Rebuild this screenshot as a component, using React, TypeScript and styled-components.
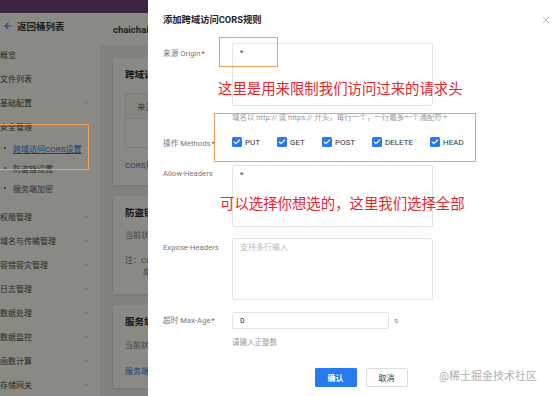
import styled, { createGlobalStyle } from 'styled-components'
import { X, ChevronDown, ArrowLeft, Check } from 'lucide-react'

const GlobalStyle = createGlobalStyle`
  *, *::before, *::after { box-sizing: border-box; }
  html, body { margin: 0; padding: 0; background: #fff; }
  body { font-family: Roboto, 'Noto Sans CJK SC', sans-serif; }
`

const Page = styled.div`
  position: relative;
  display: flex;
  width: 558px;
  height: 396px;
  overflow: hidden;
`

/* ---------- masked page behind the drawer ---------- */

const Backdrop = styled.div`
  position: relative;
  flex: none;
  width: 148px;
  height: 100%;
  display: flex;
  flex-direction: column;
  background: #f0f2f5;
  overflow: hidden;
`

const Mask = styled.div`
  position: absolute;
  inset: 0;
  background: rgba(10, 10, 0, 0.48);
  z-index: 1;
`

const TopBar = styled.div`
  flex: none;
  height: 13px;
  background: #6a3f80;
`

const BackdropBody = styled.div`
  flex: 1;
  display: flex;
  min-height: 0;
`

const Sidebar = styled.div`
  flex: none;
  width: 100px;
  background: #fff;
  display: flex;
  flex-direction: column;
`

const BackLink = styled.div`
  height: 34px;
  display: flex;
  align-items: center;
  gap: 4px;
  padding-left: 3px;
  font-size: 9.5px;
  font-weight: 700;
  color: #333;
  white-space: nowrap;

  svg {
    color: #1f6fe8;
  }
`

const Menu = styled.div`
  padding-top: 4px;
`

const MenuItem = styled.div`
  height: 24px;
  display: flex;
  align-items: center;
  justify-content: space-between;
  padding-right: 10px;
  font-size: 8px;
  color: #444;
  white-space: nowrap;

  svg {
    color: #aaa;
  }
`

const SubMenu = styled.div`
  padding-bottom: 6px;
`

const SubItem = styled.div<{ $active?: boolean }>`
  height: 20px;
  display: flex;
  align-items: center;
  gap: 7px;
  padding-left: 4px;
  font-size: 8px;
  white-space: nowrap;
  color: ${p => (p.$active ? '#1f6fe8' : '#555')};
  text-decoration: ${p => (p.$active ? 'underline' : 'none')};

  &::before {
    content: '';
    width: 2px;
    height: 2px;
    border-radius: 50%;
    background: #666;
  }
`

const Content = styled.div`
  flex: 1;
  min-width: 0;
  display: flex;
  flex-direction: column;
`

const ContentHeader = styled.div`
  flex: none;
  height: 32px;
  display: flex;
  align-items: center;
  padding-left: 13px;
  background: #fff;
  font-size: 9.5px;
  font-weight: 700;
  color: #333;
  white-space: nowrap;
`

const ContentBody = styled.div`
  display: flex;
  flex-direction: column;
  gap: 11px;
  padding: 13px 0 0 13px;
`

const Card = styled.div<{ $h: number }>`
  width: 400px;
  height: ${p => p.$h}px;
  padding: 11px 12px 0;
  background: #fff;
  box-shadow: 0 1px 3px rgba(0, 0, 0, 0.12);
  white-space: nowrap;
`

const CardTitle = styled.div`
  font-size: 9.5px;
  line-height: 12px;
  font-weight: 700;
  color: #222;
`

const CardText = styled.div<{ $mt: number; $indent?: number; $link?: boolean }>`
  margin-top: ${p => p.$mt}px;
  padding-left: ${p => p.$indent ?? 0}px;
  font-size: 8px;
  line-height: 12px;
  color: ${p => (p.$link ? '#1f6fe8' : '#777')};
`

const Table = styled.div`
  margin-top: 12px;
  height: 55px;
  border: 1px solid #e8e8e8;
`

const TableHead = styled.div`
  height: 25px;
  display: flex;
  align-items: center;
  padding-left: 11px;
  background: #fafafa;
  border-bottom: 1px solid #e8e8e8;
  font-size: 8.5px;
  color: #666;
`

/* ---------- drawer ---------- */

const Drawer = styled.div`
  position: relative;
  flex: 1;
  height: 100%;
  display: flex;
  flex-direction: column;
  padding: 0 7px 0 15px;
  background: #fff;
`

const DrawerHeader = styled.div`
  height: 43px;
  display: flex;
  align-items: flex-start;
  justify-content: space-between;
  padding-top: 14px;
`

const DrawerTitle = styled.div`
  font-size: 9.3px;
  line-height: 12px;
  font-weight: 700;
  color: #222;
`

const CloseBtn = styled.span`
  display: flex;
  color: #888;
  margin-top: 1px;
`

const FormRow = styled.div<{ $mt: number }>`
  display: flex;
  margin-top: ${p => p.$mt}px;
`

const Label = styled.div<{ $pt?: number }>`
  flex: none;
  width: 69px;
  padding-top: ${p => p.$pt ?? 0}px;
  font-size: 7.7px;
  line-height: 12px;
  color: #777;
  white-space: nowrap;
`

const Required = styled.span`
  color: #f5222d;
  margin-left: 1px;
`

const Control = styled.div`
  display: flex;
  flex-direction: column;
`

const TextBox = styled.div<{ $h: number; $placeholder?: boolean }>`
  width: 201px;
  height: ${p => p.$h}px;
  padding: 3px 7px;
  border: 1px solid #e4e4e4;
  border-radius: 2px;
  font-size: 8px;
  line-height: 12px;
  color: ${p => (p.$placeholder ? '#bbb' : '#333')};
`

const Help = styled.div<{ $mt: number }>`
  margin-top: ${p => p.$mt}px;
  font-size: 7.5px;
  line-height: 11px;
  color: #999;
  white-space: nowrap;
`

const CheckGroup = styled.div`
  display: flex;
  gap: 17px;
`

const CheckItem = styled.label`
  display: flex;
  align-items: center;
  gap: 3px;
  height: 12px;
  font-size: 8px;
  color: #333;
`

const Box = styled.span`
  width: 10px;
  height: 10px;
  border-radius: 1.5px;
  background: #2878f0;
  display: inline-flex;
  align-items: center;
  justify-content: center;
  color: #fff;
`

const InputRow = styled.div`
  display: flex;
  align-items: center;
  gap: 5px;
  font-size: 8px;
  color: #888;
`

const Input = styled.div`
  width: 157px;
  height: 17px;
  padding: 0 7px;
  display: flex;
  align-items: center;
  border: 1px solid #e4e4e4;
  border-radius: 2px;
  font-size: 8px;
  color: #333;
`

const Footer = styled.div`
  margin-top: 20px;
  display: flex;
  justify-content: center;
  gap: 9px;
  padding-left: 8px;
`

const Button = styled.button<{ $primary?: boolean }>`
  width: 42px;
  height: 19px;
  padding: 0;
  border-radius: 1px;
  border: 1px solid ${p => (p.$primary ? '#2878f0' : '#dcdcdc')};
  background: ${p => (p.$primary ? '#2878f0' : '#fff')};
  color: ${p => (p.$primary ? '#fff' : '#333')};
  font-family: inherit;
  font-size: 8px;
  font-weight: ${p => (p.$primary ? 700 : 400)};
`

const Watermark = styled.div`
  position: absolute;
  right: 21px;
  bottom: 12px;
  font-size: 11px;
  line-height: 14px;
  color: #b0b0b0;
  white-space: nowrap;
`

/* ---------- annotations drawn on top ---------- */

const Highlight = styled.div<{ $x: number; $y: number; $w: number; $h: number }>`
  position: absolute;
  left: ${p => p.$x}px;
  top: ${p => p.$y}px;
  width: ${p => p.$w}px;
  height: ${p => p.$h}px;
  border: 1.5px solid #f3a05a;
  z-index: 3;
  pointer-events: none;
`

const Note = styled.div<{ $x: number; $y: number }>`
  position: absolute;
  left: ${p => p.$x}px;
  top: ${p => p.$y}px;
  font-family: 'Noto Sans CJK SC', sans-serif;
  font-size: 14.4px;
  line-height: 15px;
  color: #e6262b;
  white-space: nowrap;
  z-index: 3;
`

const topMenu = ['概览', '文件列表']
const lowerMenu = ['权限管理', '域名与传输管理', '容错容灾管理', '日志管理', '数据处理', '数据监控', '函数计算', '存储网关']
const methods = ['PUT', 'GET', 'POST', 'DELETE', 'HEAD']

export default function App() {
  return (
    <Page>
      <GlobalStyle />
      <Backdrop>
        <TopBar />
        <BackdropBody>
          <Sidebar>
            <BackLink>
              <ArrowLeft size={10} strokeWidth={2.5} />
              返回桶列表
            </BackLink>
            <Menu>
              {topMenu.map(m => (
                <MenuItem key={m}>{m}</MenuItem>
              ))}
              <MenuItem>
                基础配置
                <ChevronDown size={7} />
              </MenuItem>
              <MenuItem>安全管理</MenuItem>
              <SubMenu>
                <SubItem $active>跨域访问CORS设置</SubItem>
                <SubItem>防盗链设置</SubItem>
                <SubItem>服务端加密</SubItem>
              </SubMenu>
              {lowerMenu.map(m => (
                <MenuItem key={m}>
                  {m}
                  <ChevronDown size={7} />
                </MenuItem>
              ))}
            </Menu>
          </Sidebar>
          <Content>
            <ContentHeader>chaichai-1258</ContentHeader>
            <ContentBody>
              <Card $h={127}>
                <CardTitle>跨域访问CORS设置</CardTitle>
                <Table>
                  <TableHead>来源 Origin</TableHead>
                </Table>
                <CardText $mt={12} $link>CORS规则配置</CardText>
              </Card>
              <Card $h={98}>
                <CardTitle>防盗链设置</CardTitle>
                <CardText $mt={11}>当前状态：未开启</CardText>
                <CardText $mt={13}>注：Cookie 与防盗链配置</CardText>
                <CardText $mt={0} $indent={18}>席</CardText>
              </Card>
              <Card $h={83}>
                <CardTitle>服务端加密</CardTitle>
                <CardText $mt={12}>当前状态：未开启</CardText>
                <CardText $mt={14} $link>服务端加密</CardText>
              </Card>
            </ContentBody>
          </Content>
        </BackdropBody>
        <Mask />
      </Backdrop>

      <Drawer>
        <DrawerHeader>
          <DrawerTitle>添加跨域访问CORS规则</DrawerTitle>
          <CloseBtn>
            <X size={10} strokeWidth={1.5} />
          </CloseBtn>
        </DrawerHeader>

        <FormRow $mt={0}>
          <Label $pt={5}>
            来源 Origin<Required>*</Required>
          </Label>
          <Control>
            <TextBox $h={63}>*</TextBox>
            <Help $mt={6}>域名以 http:// 或 https:// 开头，每行一个，一行最多一个通配符 *</Help>
          </Control>
        </FormRow>

        <FormRow $mt={13}>
          <Label $pt={2}>
            操作 Methods<Required>*</Required>
          </Label>
          <CheckGroup>
            {methods.map(m => (
              <CheckItem key={m}>
                <Box>
                  <Check size={8} strokeWidth={3.5} />
                </Box>
                {m}
              </CheckItem>
            ))}
          </CheckGroup>
        </FormRow>

        <FormRow $mt={15}>
          <Label $pt={3}>Allow-Headers</Label>
          <TextBox $h={62}>*</TextBox>
        </FormRow>

        <FormRow $mt={11}>
          <Label $pt={4}>Expose-Headers</Label>
          <TextBox $h={62} $placeholder>支持多行输入</TextBox>
        </FormRow>

        <FormRow $mt={12}>
          <Label $pt={3}>
            超时 Max-Age<Required>*</Required>
          </Label>
          <Control>
            <InputRow>
              <Input>0</Input>
              s
            </InputRow>
            <Help $mt={8}>请输入正整数</Help>
          </Control>
        </FormRow>

        <Footer>
          <Button $primary>确认</Button>
          <Button>取消</Button>
        </Footer>

        <Watermark>@稀土掘金技术社区</Watermark>
      </Drawer>

      <Highlight $x={-1} $y={124} $w={90} $h={46} />
      <Highlight $x={219} $y={37} $w={59} $h={30} />
      <Highlight $x={214} $y={113} $w={262} $h={49} />
      <Note $x={218} $y={80}>这里是用来限制我们访问过来的请求头</Note>
      <Note $x={220} $y={195}>可以选择你想选的，这里我们选择全部</Note>
    </Page>
  )
}
